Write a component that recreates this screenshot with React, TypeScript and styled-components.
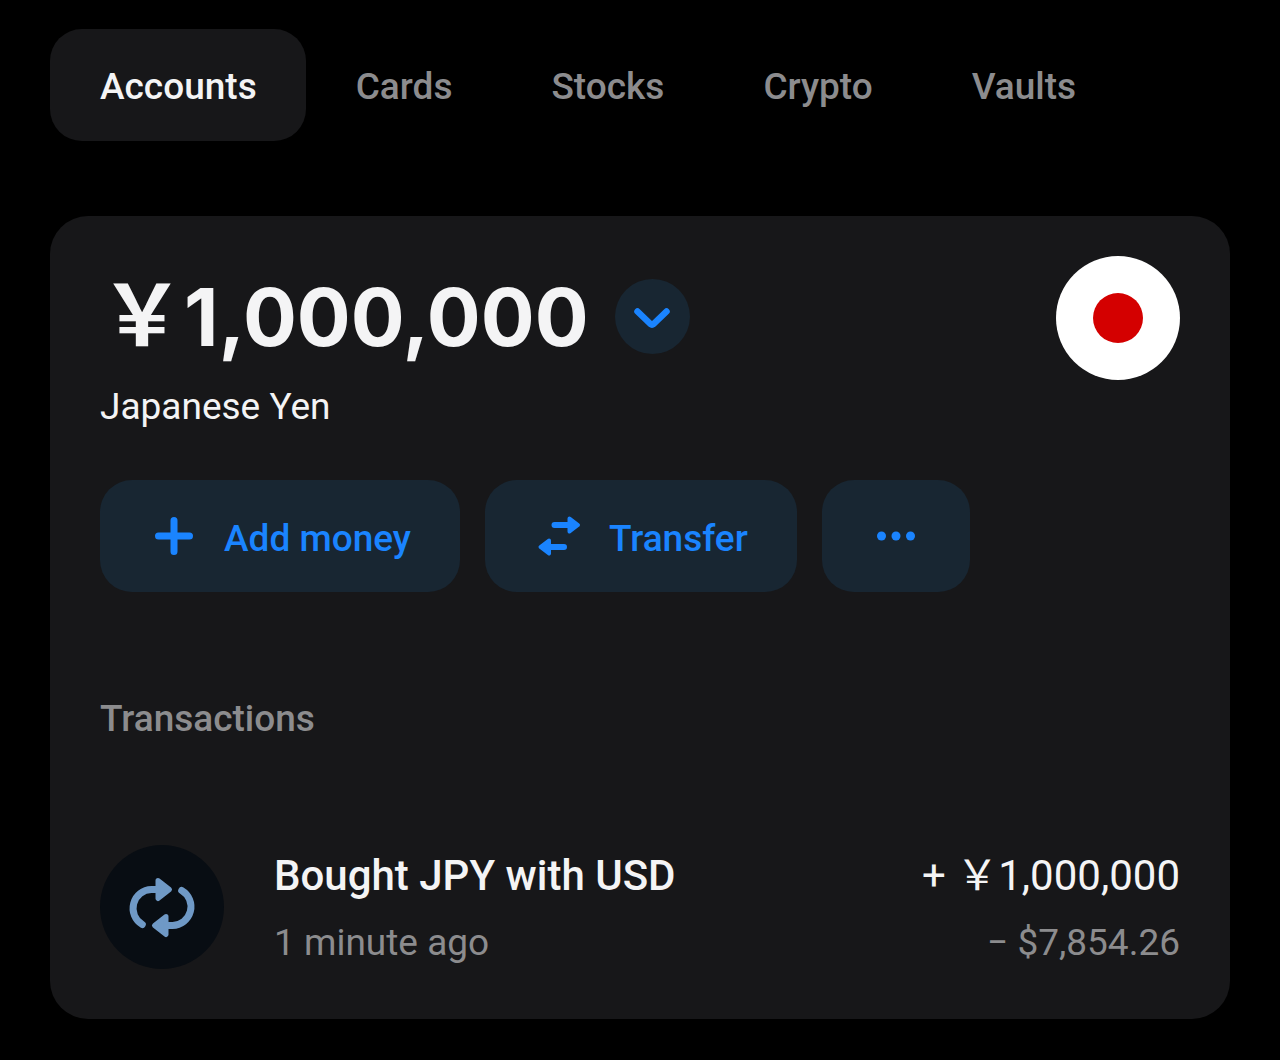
import React from "react";
import styled, { createGlobalStyle } from "styled-components";

const color = {
  page: "#000000",
  surface: "#171719",
  text: "#f4f4f5",
  muted: "#8c8c8e",
  accent: "#1a84ff",
  accentSurface: "#182632",
  swap: "#6f99c6",
  swapSurface: "#080d13",
};

const GlobalStyle = createGlobalStyle`
  *, *::before, *::after { box-sizing: border-box; }
  body {
    margin: 0;
    background: ${color.page};
    color: ${color.text};
    font-family: Roboto, "Noto Sans CJK JP", sans-serif;
    font-size: 37px;
    line-height: 44px;
  }
  button { font: inherit; border: 0; margin: 0; cursor: pointer; }
  h1, h2, p, ul { margin: 0; padding: 0; font: inherit; }
`;

const Page = styled.div`
  display: flex;
  flex-direction: column;
  gap: 75px;
  padding: 29px 50px 40px;
`;

const Tabs = styled.div`
  display: flex;
`;

const Tab = styled.button<{ $active?: boolean }>`
  padding: 36px 49px 32px 50px;
  border-radius: 32px;
  background: ${(p) => (p.$active ? color.surface : "transparent")};
  color: ${(p) => (p.$active ? color.text : color.muted)};
  font-weight: 500;
`;

const Card = styled.main`
  padding: 40px 50px 50px;
  border-radius: 38px;
  background: ${color.surface};
`;

const Header = styled.header`
  display: flex;
  justify-content: space-between;
  align-items: flex-start;
`;

const BalanceRow = styled.div`
  display: flex;
  align-items: center;
  gap: 26px;
  height: 120px;
`;

const Balance = styled.h1`
  && {
    font-family: Inter, "Noto Sans CJK JP", sans-serif;
    font-size: 80px;
    font-weight: 700;
    line-height: 120px;
  }
`;

const CurrencySign = styled.span`
  font-size: 84px;
`;

const RoundButton = styled.button`
  display: grid;
  place-items: center;
  width: 75px;
  height: 75px;
  padding: 0;
  border-radius: 50%;
  background: ${color.accentSurface};
  color: ${color.accent};
`;

const Currency = styled.p`
  && { margin-top: 9px; }
`;

const Flag = styled.svg`
  flex: none;
  width: 124px;
  height: 124px;
`;

const Actions = styled.div`
  display: flex;
  gap: 25px;
  margin-top: 51px;
`;

const ActionButton = styled.button`
  display: flex;
  align-items: center;
  gap: 25px;
  height: 112px;
  padding: 0 49px;
  border-radius: 32px;
  background: ${color.accentSurface};
  color: ${color.accent};
  font-weight: 500;
`;

const ActionLabel = styled.span`
  padding-top: 5px;
`;

const Icon = styled.svg`
  display: block;
  flex: none;
  width: 50px;
  height: 50px;
  fill: none;
  stroke: currentColor;
  stroke-width: 7;
  stroke-linecap: round;
  stroke-linejoin: round;
`;

const SectionTitle = styled.h2`
  && {
    margin-top: 105px;
    color: ${color.muted};
    font-weight: 500;
  }
`;

const TransactionList = styled.ul`
  && { margin-top: 104px; }
  list-style: none;
`;

const Transaction = styled.li`
  display: flex;
  align-items: center;
  gap: 50px;
`;

const Badge = styled.svg`
  flex: none;
  width: 124px;
  height: 124px;
  border-radius: 50%;
  background: ${color.swapSurface};
`;

const Lines = styled.div<{ $end?: boolean }>`
  display: flex;
  flex-direction: column;
  gap: 18px;
  flex: ${(p) => (p.$end ? "none" : "1")};
  text-align: ${(p) => (p.$end ? "right" : "left")};
`;

const Primary = styled.span<{ $strong?: boolean }>`
  font-size: 42px;
  line-height: 54px;
  font-weight: ${(p) => (p.$strong ? 500 : 400)};
`;

const Secondary = styled.span`
  color: ${color.muted};
`;

const tabs = ["Accounts", "Cards", "Stocks", "Crypto", "Vaults"];

const PlusIcon = () => (
  <Icon viewBox="0 0 50 50" aria-hidden="true">
    <path d="M25 9.500v31M9.500 25h31" />
  </Icon>
);

const TransferIcon = () => (
  <Icon viewBox="0 0 50 50" aria-hidden="true">
    <path d="M20.500 14H34M30 36H16" strokeWidth="6" />
    <path
      d="M35.500 7.500L44 14L35.500 20.500ZM15 29.500L6.500 36L15 42.500Z"
      fill="currentColor"
      strokeWidth="4"
    />
  </Icon>
);

const MoreIcon = () => (
  <Icon viewBox="0 0 50 50" aria-hidden="true">
    <g fill="currentColor" stroke="none">
      <circle cx="10.500" cy="25" r="4.500" />
      <circle cx="25" cy="25" r="4.500" />
      <circle cx="39.500" cy="25" r="4.500" />
    </g>
  </Icon>
);

const ChevronIcon = () => (
  <Icon viewBox="0 0 50 50" aria-hidden="true">
    <path d="M10.500 20.500L23.500 33Q25 34.200 26.500 33L39.500 20.500" strokeWidth="6.500" />
  </Icon>
);

const SwapBadge = () => (
  <Badge viewBox="0 0 124 124" aria-hidden="true">
    <g fill="none" stroke={color.swap} strokeLinecap="round" strokeLinejoin="round">
      <path d="M57 44.500H51.500A18.800 18.800 0 0 0 42.300 79.500" strokeWidth="7" />
      <path d="M67 80.500H72.500A18.800 18.800 0 0 0 81.700 45.500" strokeWidth="7" />
      <path
        d="M58 35.500L69.500 44.500L58 53.500ZM66 71.500L54.500 80.500L66 89.500Z"
        fill={color.swap}
        strokeWidth="5"
      />
    </g>
  </Badge>
);

export default function App() {
  const [active, setActive] = React.useState(tabs[0]);
  return (
    <>
      <GlobalStyle />
      <Page>
        <Tabs role="tablist">
          {tabs.map((name) => (
            <Tab
              key={name}
              role="tab"
              aria-selected={name === active}
              $active={name === active}
              onClick={() => setActive(name)}
            >
              {name}
            </Tab>
          ))}
        </Tabs>
        <Card>
          <Header>
            <div>
              <BalanceRow>
                <Balance>
                  <CurrencySign>{"\uFFE5"}</CurrencySign>1,000,000
                </Balance>
                <RoundButton aria-label="Choose account">
                  <ChevronIcon />
                </RoundButton>
              </BalanceRow>
              <Currency>Japanese Yen</Currency>
            </div>
            <Flag viewBox="0 0 124 124" role="img" aria-label="Japan">
              <circle cx="62" cy="62" r="62" fill="#ffffff" />
              <circle cx="62" cy="62" r="25" fill="#d40000" />
            </Flag>
          </Header>
          <Actions>
            <ActionButton>
              <PlusIcon />
              <ActionLabel>Add money</ActionLabel>
            </ActionButton>
            <ActionButton>
              <TransferIcon />
              <ActionLabel>Transfer</ActionLabel>
            </ActionButton>
            <ActionButton aria-label="More">
              <MoreIcon />
            </ActionButton>
          </Actions>
          <SectionTitle>Transactions</SectionTitle>
          <TransactionList>
            <Transaction>
              <SwapBadge />
              <Lines>
                <Primary $strong>Bought JPY with USD</Primary>
                <Secondary>1 minute ago</Secondary>
              </Lines>
              <Lines $end>
                <Primary>{"+ \uFFE51,000,000"}</Primary>
                <Secondary>− $7,854.26</Secondary>
              </Lines>
            </Transaction>
          </TransactionList>
        </Card>
      </Page>
    </>
  );
}
